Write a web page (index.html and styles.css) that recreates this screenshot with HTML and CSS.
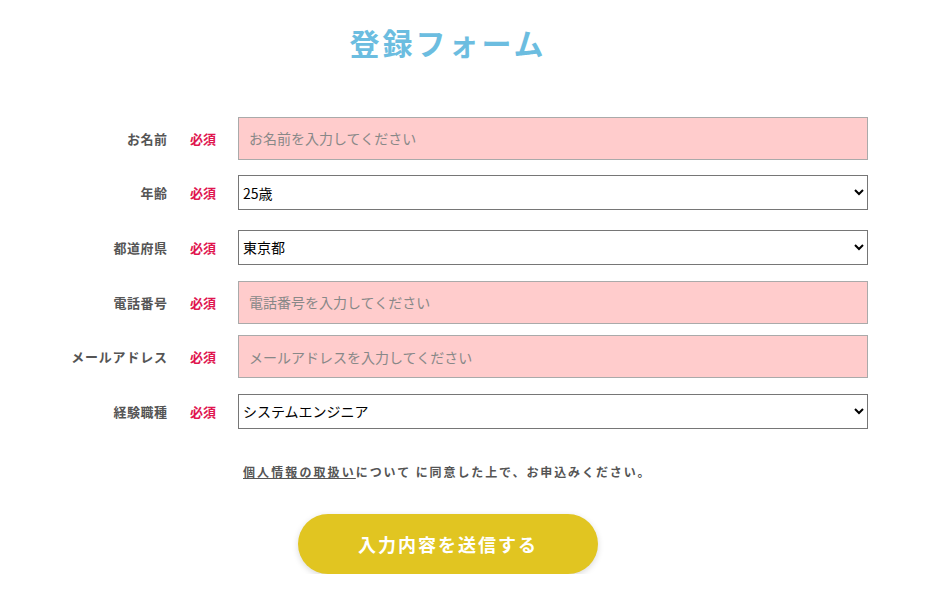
FILE: index.html
```html
<!DOCTYPE html>
<html lang="ja">
<head>
<meta charset="utf-8">
<title>登録フォーム</title>
<link rel="stylesheet" href="styles.css">
</head>
<body>
<main class="page">
  <h1 class="title">登録フォーム</h1>
  <form class="form">
    <div class="row">
      <label class="label" for="name">お名前</label>
      <span class="req">必須</span>
      <input class="text" id="name" type="text" placeholder="お名前を入力してください">
    </div>
    <div class="row">
      <label class="label" for="age">年齢</label>
      <span class="req">必須</span>
      <select class="sel" id="age"><option>25歳</option></select>
    </div>
    <div class="row">
      <label class="label" for="pref">都道府県</label>
      <span class="req">必須</span>
      <select class="sel" id="pref"><option>東京都</option></select>
    </div>
    <div class="row">
      <label class="label" for="tel">電話番号</label>
      <span class="req">必須</span>
      <input class="text" id="tel" type="text" placeholder="電話番号を入力してください">
    </div>
    <div class="row">
      <label class="label label-kana" for="mail">メールアドレス</label>
      <span class="req">必須</span>
      <input class="text" id="mail" type="text" placeholder="メールアドレスを入力してください">
    </div>
    <div class="row">
      <label class="label" for="job">経験職種</label>
      <span class="req">必須</span>
      <select class="sel" id="job"><option>システムエンジニア</option></select>
    </div>
    <p class="notice"><a class="notice-link" href="#">個人情報の取扱い</a>について に同意した上で、お申込みください。</p>
    <div class="actions">
      <button class="submit" type="button">入力内容を送信する</button>
    </div>
  </form>
</main>
</body>
</html>
```

FILE: styles.css
```css
* { box-sizing: border-box; }

body {
  margin: 0;
  background: #fff;
  font-family: "Noto Sans CJK JP", "Noto Sans", sans-serif;
  color: #555;
}

.page {
  width: 840px;
  margin-left: 28px;
}

.title {
  margin: 21px 0 0;
  font-size: 30px;
  line-height: 42px;
  font-weight: 700;
  color: #6cbde0;
  text-align: center;
  letter-spacing: 3px;
}

.form {
  margin-top: 48px;
}

.row {
  display: grid;
  grid-template-columns: 139px 25px 630px;
  column-gap: 23px;
  align-items: center;
  height: 54.6px;
}

.label {
  text-align: right;
  font-size: 13px;
  font-weight: 700;
  color: #555;
  letter-spacing: 0.5px;
  margin-right: -0.5px;
}

.label-kana {
  letter-spacing: 0.8px;
  margin-right: -0.8px;
}

.req {
  font-size: 13px;
  font-weight: 700;
  color: #e0154f;
  white-space: nowrap;
}

.text {
  height: 43px;
  width: 630px;
  margin: 0;
  padding: 0 10px;
  border: 1px solid #aaa;
  background: #ffcccc;
  font-family: "Noto Sans CJK JP", sans-serif;
  font-size: 14px;
  color: #333;
  outline: none;
}

.text::placeholder {
  color: #888;
}

.sel {
  height: 35px;
  width: 630px;
  margin: 0;
  padding: 0;
  border: 1px solid #767676;
  border-radius: 0;
  background-color: #fff;
  font-family: "Noto Sans CJK JP", sans-serif;
  font-size: 14px;
  color: #000;
}

.notice {
  margin: 23px 0 0 215px;
  font-size: 12px;
  line-height: 20px;
  font-weight: 700;
  color: #555;
  letter-spacing: 1.9px;
}

.notice-link {
  color: #555;
  text-decoration: underline;
  letter-spacing: 2.1px;
}

.actions {
  display: flex;
  justify-content: center;
  margin-top: 32px;
}

.submit {
  width: 300px;
  height: 60px;
  border: none;
  border-radius: 30px;
  background: #e1c521;
  color: #fff;
  font-family: "Noto Sans CJK JP", sans-serif;
  font-size: 18px;
  font-weight: 700;
  letter-spacing: 2px;
  box-shadow: 0 2px 6px rgba(0, 0, 0, 0.15);
}
```
